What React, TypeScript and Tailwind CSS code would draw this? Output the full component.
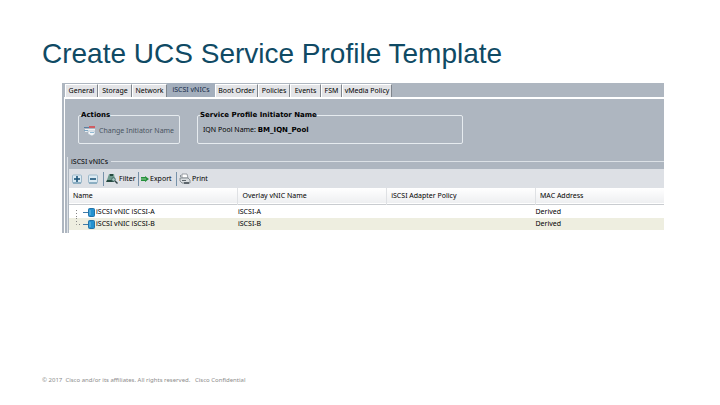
import type { ReactNode } from "react";

const tabs = [
  { name: "General", width: "w-[33px]" },
  { name: "Storage", width: "w-[34px]" },
  { name: "Network", width: "w-[35px]" },
  { name: "iSCSI vNICs", width: "w-12" },
  { name: "Boot Order", width: "w-[43px]" },
  { name: "Policies", width: "w-8" },
  { name: "Events", width: "w-[31px]" },
  { name: "FSM", width: "w-[21px]" },
  { name: "vMedia Policy", width: "w-[50px]" },
];

const rows = [
  { name: "iSCSI vNIC iSCSI-A", overlay: "iSCSI-A", mac: "Derived" },
  { name: "iSCSI vNIC iSCSI-B", overlay: "iSCSI-B", mac: "Derived" },
];

const columns = ["Name", "Overlay vNIC Name", "iSCSI Adapter Policy", "MAC Address"];

const RenameIcon = () => (
  <svg className="h-3 w-3 shrink-0" viewBox="0 0 12 12">
    <path d="M0 2h5v1H0z" fill="#5b7fa0" />
    <path d="M5 1h6v2H5z" fill="#cf5d62" />
    <path d="M1 4h10v3H1z" fill="#e9eef3" />
    <path d="M0 5h4v1H0z" fill="#7fa6c2" />
    <path d="M4 6h7v3l-3 2-4-2z" fill="#f4f6f8" stroke="#a3b3c0" strokeWidth=".6" />
    <path d="M6 7h4v1H6z" fill="#8fb9d4" />
  </svg>
);

const BoxIcon = ({ plus = false }: { plus?: boolean }) => (
  <svg className="h-[10px] w-[10px]" viewBox="0 0 10 10">
    <rect x=".5" y="1" width="9" height="8" rx="1" fill="#dbeaf3" stroke="#9db8c9" />
    <path d="M2 4.2h6v1.6H2z" fill="#1c5478" />
    {plus && <path d="M4.2 2h1.6v6H4.2z" fill="#1c5478" />}
    <path d="M1 9h8" stroke="#5d8daa" />
  </svg>
);

const FilterIcon = () => (
  <svg className="h-3 w-3 shrink-0" viewBox="0 0 12 12">
    <path d="M3 1h5l1 6H1z" fill="#6f9a8e" />
    <path d="M4 1h3v2H4zM1 7h7v2H0z" fill="#24493f" />
    <circle cx="7.5" cy="6.5" r="1.8" fill="#a9c9c3" stroke="#456b66" />
    <path d="M9 8l2.5 2.5" stroke="#314449" strokeWidth="1.4" />
  </svg>
);

const ExportIcon = () => (
  <svg className="h-2 w-2 shrink-0" viewBox="0 0 8 8">
    <path d="M0 2h4V1l4 3-4 3V6H0z" fill="#25903b" />
    <path d="M0 4h5" stroke="#b5e0b5" strokeWidth=".8" />
  </svg>
);

const PrintIcon = () => (
  <svg className="h-3 w-3 shrink-0" viewBox="0 0 12 12">
    <path d="M3 1h5l1 4H3z" fill="#fff" stroke="#858c92" strokeWidth=".8" />
    <path d="M1 5h8l2 2v3H3L1 8z" fill="#d9dde0" stroke="#757d84" strokeWidth=".8" />
    <path d="M3 7h4v1H3zM5 9h5v2H5z" fill="#5d656c" />
    <path d="M1 2h1v2H1z" fill="#8c9499" />
  </svg>
);

const NicIcon = ({ last }: { last: boolean }) => (
  <svg className="h-3 w-[19px] shrink-0" viewBox="0 0 19 12">
    <path d={last ? "M.5 0v6.5H6" : "M.5 4v8"} fill="none" stroke="#858585" strokeDasharray="1 2" />
    <path d="M7 6.5h5" stroke="#3f7ba8" />
    <rect x="12.5" y="2.5" width="6" height="8" rx="1" fill="#2492d0" stroke="#2273a8" />
    <path d="M14 4v5" stroke="#6fc0e8" />
  </svg>
);

const Group = ({ title, className, children }: { title: string; className: string; children: ReactNode }) => (
  <fieldset className={`h-[34px] min-w-0 rounded-xs border border-[#e6ebef] pl-[5px] ${className}`}>
    <legend className="-ml-[3px] h-[10px] font-['DejaVu_Sans',sans-serif] leading-[10px] font-bold whitespace-nowrap text-black">
      {title}
    </legend>
    {children}
  </fieldset>
);

const ToolButton = ({ icon, label, className }: { icon: ReactNode; label: string; className: string }) => (
  <button className={`flex h-[14px] items-center gap-px border-l border-[#7792aa] pl-0.5 ${className}`}>
    {icon}
    {label}
  </button>
);

export default function App() {
  return (
    <div className="min-h-screen bg-white">
      <main className="px-[42px] pt-[38px] font-['Liberation_Sans',sans-serif]">
        <h1 className="text-[28px] leading-8 whitespace-nowrap text-[#0f4a64]">Create UCS Service Profile Template</h1>

        <section className="mt-[13px] mr-[14px] ml-5 bg-[#aeb6c0] font-['Noto_Sans',sans-serif] text-[7px] leading-[10px] text-black">
          <nav className="flex h-[14px] items-end pl-[3px]">
            {tabs.map((tab) => (
              <button
                key={tab.name}
                className={`flex justify-center whitespace-nowrap ${tab.width} ${
                  tab.name === "iSCSI vNICs"
                    ? "h-[14px] bg-[#a4afbd] pt-0.5 text-[#142a48]"
                    : "h-[13px] border-t border-r border-l border-t-white border-r-[#7f858c] border-l-white bg-[#e3e4e7] pt-px"
                }`}
              >
                {tab.name}
              </button>
            ))}
          </nav>

          <div className="ml-0.5 border-t-2 border-l border-white pt-[11px]">
            <div className="flex gap-[17px] pl-[13px]">
              <Group title="Actions" className="w-[102px]">
                <button className="flex items-center gap-[3px] pt-[5px] whitespace-nowrap text-[#4a5561]">
                  <RenameIcon />
                  Change Initiator Name
                </button>
              </Group>
              <Group title="Service Profile Initiator Name" className="w-[266px]">
                <p className="pt-[5px]">
                  IQN Pool Name: <b className="font-['DejaVu_Sans',sans-serif]">BM_IQN_Pool</b>
                </p>
              </Group>
            </div>

            <div className="mt-[13px] ml-0.5 border-l border-[#dce1e6]">
              <div className="flex h-3 items-start">
                <h2 className="px-[3px] leading-[10px]">iSCSI vNICs</h2>
                <div className="mt-1 h-px flex-1 bg-[#dce1e6]" />
              </div>
              <div className="ml-px">
                <div className="flex h-[19px] items-center bg-[#dde0e5] pl-[3px]">
                  <button aria-label="Expand" className="w-4">
                    <BoxIcon plus />
                  </button>
                  <button aria-label="Collapse" className="w-[15px]">
                    <BoxIcon />
                  </button>
                  <ToolButton icon={<FilterIcon />} label="Filter" className="w-[35px]" />
                  <ToolButton icon={<ExportIcon />} label="Export" className="w-[38px]" />
                  <ToolButton icon={<PrintIcon />} label="Print" className="w-10" />
                </div>
                <div className="bg-white pb-[3px]">
                  <table className="w-full table-fixed border-collapse text-left">
                    <colgroup>
                      <col className="w-[28.4%]" />
                      <col className="w-[25%]" />
                      <col className="w-[25%]" />
                      <col />
                    </colgroup>
                    <thead>
                      <tr className="h-4 border-b border-[#c9ccd0] bg-linear-to-b from-white to-[#eeeff1]">
                        {columns.map((column) => (
                          <th key={column} className="border-r border-[#dfe1e4] py-0 pl-1 font-normal last:border-r-0">
                            {column}
                          </th>
                        ))}
                      </tr>
                      <tr className="h-0.5" />
                    </thead>
                    <tbody>
                      {rows.map((row, i) => (
                        <tr key={row.name} className="h-3 even:bg-[#eeeee0]">
                          <td className="p-0 pl-[7px]">
                            <div className="flex items-center gap-px whitespace-nowrap">
                              <NicIcon last={i === rows.length - 1} />
                              {row.name}
                            </div>
                          </td>
                          <td className="p-0">{row.overlay}</td>
                          <td className="p-0" />
                          <td className="p-0">{row.mac}</td>
                        </tr>
                      ))}
                    </tbody>
                  </table>
                </div>
              </div>
            </div>
          </div>
        </section>
      </main>

      <footer className="mt-[142px] pl-[42px] font-['Noto_Sans',sans-serif] text-[6px] leading-[10px] whitespace-pre text-[#8c8c8c]">
        {"© 2017  Cisco and/or its affiliates. All rights reserved.   Cisco Confidential"}
      </footer>
    </div>
  );
}
